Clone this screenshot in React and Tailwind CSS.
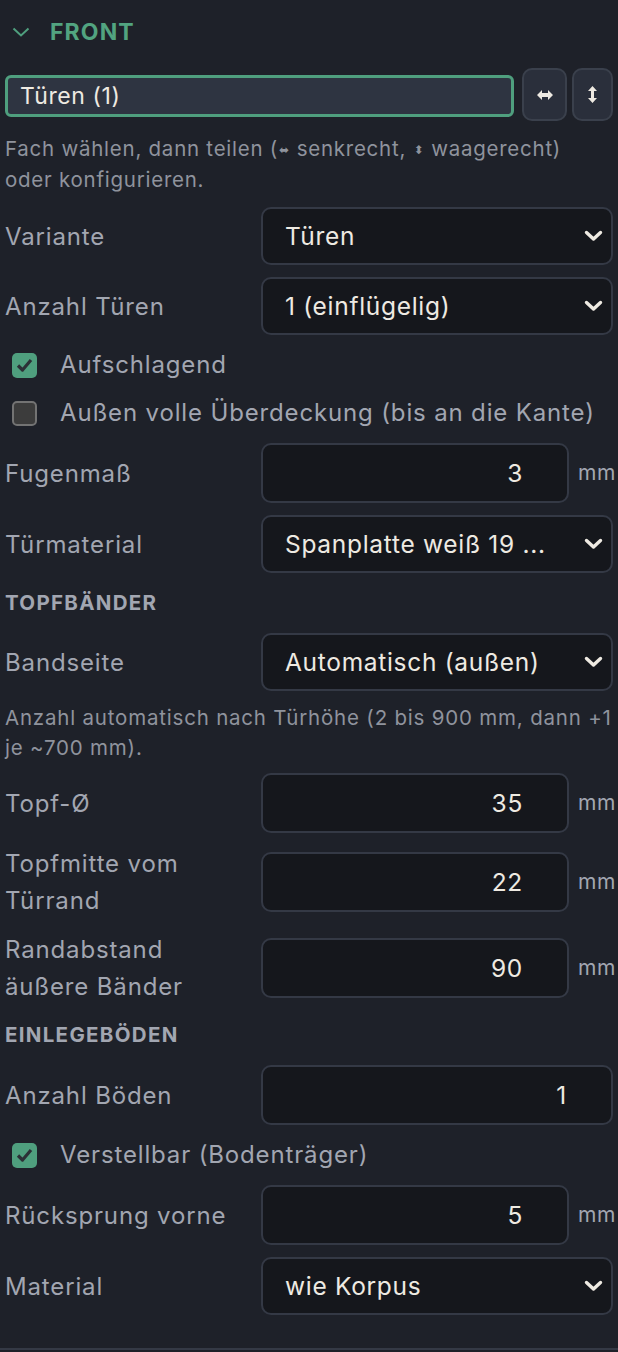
import React from "react";

const Chevron = () => (
  <svg width="19" height="12" viewBox="0 0 19 12" className="absolute right-[8px] top-1/2 -translate-y-1/2">
    <polyline points="2.5,2.5 9.5,9 16.5,2.5" fill="none" stroke="#eeeae2" strokeWidth="3.4" strokeLinecap="round" strokeLinejoin="round" />
  </svg>
);

const Label = ({ children }) => (
  <div className="text-[24px] leading-[37px] tracking-[0.85px] text-[#a2a6b1]">{children}</div>
);

const SelectRow = ({ label, value }) => (
  <div className="grid grid-cols-[256px_352px] items-center">
    <Label>{label}</Label>
    <div className="relative h-[58px] rounded-[10px] border-2 border-[#343945] bg-[#15171c] pl-[22px] flex items-center text-[24.5px] tracking-[0.7px] text-[#eeeae2]">
      {value}
      <Chevron />
    </div>
  </div>
);

const NumberRow = ({ label, value, unit = true }) => (
  <div className="grid grid-cols-[256px_352px] items-center">
    <Label>{label}</Label>
    <div className="flex items-center">
      <input
        readOnly
        value={value}
        className={`${unit ? "w-[308px]" : "w-[352px]"} h-[60px] rounded-[10px] border-2 border-[#343945] bg-[#15171c] pr-[44px] text-right text-[24.5px] tracking-[0.7px] text-[#eeeae2] outline-none`}
      />
      {unit && <span className="ml-[9px] text-[21px] tracking-[0.5px] text-[#a2a6b1]">mm</span>}
    </div>
  </div>
);

const Check = ({ checked, label }) => (
  <div className="flex items-center h-[36px] pl-[7px]">
    {checked ? (
      <div className="w-[25px] h-[25px] rounded-[5px] bg-[#4f9f7e] flex items-center justify-center">
        <svg width="17" height="14" viewBox="0 0 17 14">
          <polyline points="2,7.5 6.5,12 15,2" fill="none" stroke="#2c3036" strokeWidth="3.2" strokeLinejoin="round" />
        </svg>
      </div>
    ) : (
      <div className="w-[25px] h-[25px] rounded-[5px] bg-[#3c3c3c] border-2 border-[#737373]" />
    )}
    <span className="ml-[23px] text-[24px] tracking-[0.85px] text-[#a2a6b1]">{label}</span>
  </div>
);

const Section = ({ children }) => (
  <div className="h-[36px] flex items-center text-[20.5px] font-bold tracking-[1.3px] text-[#a2a6b1]">{children}</div>
);

const Arrow = ({ children }) => (
  <span className="inline-block mx-[1px] font-['DejaVu_Sans'] text-[12px] leading-none tracking-normal align-middle">{children}</span>
);

export default function App() {
  return (
    <div className="min-h-screen bg-[#1e2129] font-['Inter',sans-serif]">
      <div className="px-[5px] pb-[33px] border-b-2 border-[#343945]">
        {/* header */}
        <div className="h-[68px] flex items-center pl-[7px] pb-[4px]">
          <svg width="18" height="10" viewBox="0 0 18 10">
            <polyline points="1.5,1.5 9,8.5 16.5,1.5" fill="none" stroke="#4f9f7e" strokeWidth="2" />
          </svg>
          <span className="ml-[20px] text-[23px] font-bold text-[#52a480] tracking-[1.1px]">FRONT</span>
        </div>

        <div className="flex flex-col gap-3">
          {/* compartment */}
          <div className="flex items-center h-[53px]">
            <div className="w-[509px] h-[42px] mt-[3px] rounded-[6px] border-[3px] border-[#4f9f7e] bg-[#2e3441] flex items-center pl-[12px] text-[23px] tracking-[0.6px] text-[#eeeae2]">
              Türen (1)
            </div>
            <button className="ml-[8px] w-[45px] h-[53px] rounded-[10px] border-2 border-[#3a404c] bg-[#2a2f3b] flex items-center justify-center">
              <svg width="16" height="10" viewBox="0 0 16 10">
                <path d="M0 5 L5 0 V3 H11 V0 L16 5 L11 10 V7 H5 V10 Z" fill="#eeeae2" />
              </svg>
            </button>
            <button className="ml-[5px] w-[41px] h-[53px] rounded-[10px] border-2 border-[#3a404c] bg-[#2a2f3b] flex items-center justify-center">
              <svg width="9" height="17" viewBox="0 0 9 17">
                <path d="M4.5 0 L9 5 H6 V12 H9 L4.5 17 L0 12 H3 V5 H0 Z" fill="#eeeae2" />
              </svg>
            </button>
          </div>

          <p className="h-[62px] text-[20.5px] leading-[31px] tracking-[0.75px] text-[#8f939d]">
            Fach wählen, dann teilen (<Arrow>⬌</Arrow> senkrecht, <Arrow>⬍</Arrow> waagerecht) oder konfigurieren.
          </p>

          <SelectRow label="Variante" value="Türen" />
          <SelectRow label="Anzahl Türen" value="1 (einflügelig)" />
          <Check checked label="Aufschlagend" />
          <Check label="Außen volle Überdeckung (bis an die Kante)" />
          <NumberRow label="Fugenmaß" value="3" />
          <SelectRow label="Türmaterial" value="Spanplatte weiß 19 ..." />

          <Section>TOPFBÄNDER</Section>
          <SelectRow label="Bandseite" value="Automatisch (außen)" />
          <p className="h-[58px] text-[20.5px] leading-[30px] tracking-[0.8px] text-[#8f939d]">
            Anzahl automatisch nach Türhöhe (2 bis 900 mm, dann +1 je ~700 mm).
          </p>
          <NumberRow label="Topf-Ø" value="35" />
          <NumberRow label={<>Topfmitte vom<br />Türrand</>} value="22" />
          <NumberRow label={<>Randabstand<br />äußere Bänder</>} value="90" />

          <Section>EINLEGEBÖDEN</Section>
          <NumberRow label="Anzahl Böden" value="1" unit={false} />
          <Check checked label="Verstellbar (Bodenträger)" />
          <NumberRow label="Rücksprung vorne" value="5" />
          <SelectRow label="Material" value="wie Korpus" />
        </div>
      </div>
    </div>
  );
}
